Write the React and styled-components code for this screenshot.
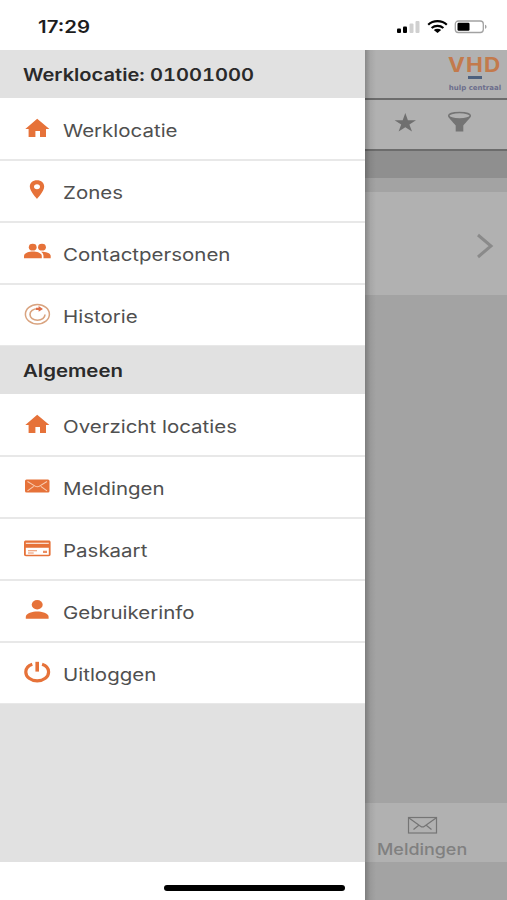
import styled, { createGlobalStyle } from "styled-components"

const GlobalStyle = createGlobalStyle`
    * {
        box-sizing: border-box;
    }
    body {
        margin: 0;
        background-color: #fff;
        font-family: Inter, "Liberation Sans", sans-serif;
    }
`

const Screen = styled.div`
    width: 507px;
    height: 900px;
    display: flex;
    flex-direction: column;
    overflow: hidden;
    position: relative;
    background-color: #fff;
`

//status bar of the phone
const StatusBar = styled.div`
    height: 50px;
    flex: none;
    display: flex;
    align-items: center;
    justify-content: space-between;
    padding: 3px 19px 0 38px;
`

//all labels are a bit wider than the font itself, so they get stretched from the left
const Label = styled.span`
    display: inline-block;
    white-space: nowrap;
    transform: scaleX(${props => props.$stretch || 1.17});
    transform-origin: ${props => props.$origin || "left"} center;
`

const Time = styled(Label)`
    font-size: 17px;
    font-weight: 600;
    line-height: 20px;
    color: #1d1d1d;
`

const Status = styled.div`
    display: flex;
    align-items: center;
`

const Main = styled.div`
    flex: 1;
    display: flex;
    min-height: 0;
`

const Drawer = styled.nav`
    width: 365px;
    flex: none;
    display: flex;
    flex-direction: column;
    background-color: #e1e1e1;
`

const SectionTitle = styled.div`
    height: 48px;
    flex: none;
    display: flex;
    align-items: center;
    padding: 1px 0 0 23px;
    font-size: 17px;
    font-weight: 600;
    font-variant-numeric: tabular-nums;
    color: #2a2a2a;
`

const List = styled.div`
    flex: none;
    display: flex;
    flex-direction: column;
`

//the first row is 1px higher and the last one has a thinner line, the section title follows it directly
const Item = styled.div`
    height: 62px;
    display: flex;
    align-items: center;
    padding-left: 23px;
    background-color: #fff;
    border-bottom: 2px solid #e8e8e8;
    font-size: 17.5px;
    color: #505050;

    &:first-child {
        height: 63px;
        padding-top: 1px;
    }

    &:last-child {
        height: 61px;
        border-bottom: 1px solid #e8e8e8;
    }
`

const IconBox = styled.div`
    width: 28px;
    height: 24px;
    margin-right: 12px;
    flex: none;
    display: flex;
`

const ItemLabel = styled(Label)`
    padding-top: 3px;
`

const DrawerFoot = styled.div`
    height: 38px;
    flex: none;
    margin-top: auto;
    background-color: #fff;
`

//the page behind the drawer, already dimmed
const Page = styled.div`
    flex: 1;
    display: flex;
    flex-direction: column;
    position: relative;
    background-color: #a3a3a3;

    &::before {
        content: "";
        position: absolute;
        top: 0;
        bottom: 0;
        left: 0;
        width: 11px;
        background: linear-gradient(to right, rgba(0, 0, 0, 0.23), rgba(0, 0, 0, 0.06) 50%, rgba(0, 0, 0, 0));
    }
`

const Header = styled.div`
    height: 50px;
    flex: none;
    display: flex;
    justify-content: flex-end;
    padding: 5px 6px 0 0;
    background-color: #b1b1b1;
    border-bottom: 2px solid #6c6c6c;
`

const Logo = styled.div`
    width: 52px;
    display: flex;
    flex-direction: column;
    align-items: center;
`

const LogoName = styled.div`
    height: 20px;
    font-size: 20px;
    font-weight: 700;
    line-height: 20px;
    letter-spacing: 1px;
    color: #c37a4c;
`

const LogoDash = styled.div`
    width: 14px;
    height: 3px;
    margin-top: 1px;
    background-color: #4c607e;
`

const LogoSub = styled.div`
    margin-top: 4px;
    font-family: "DejaVu Sans", sans-serif;
    font-size: 7px;
    font-weight: 700;
    line-height: 11px;
    white-space: nowrap;
    color: #6c6d8c;
`

const Toolbar = styled.div`
    height: 51px;
    flex: none;
    display: flex;
    gap: 30px;
    padding: 11px 0 0 28px;
    background-color: #b1b1b1;
    border-bottom: 2px solid #6c6c6c;
`

const Band = styled.div`
    height: 27px;
    flex: none;
    background-color: #8f8f8f;
`

const Card = styled.div`
    height: 103px;
    flex: none;
    display: flex;
    align-items: center;
    justify-content: flex-end;
    margin-top: 14px;
    padding: 5px 12px 0 0;
    background-color: #b1b1b1;
`

const TabBar = styled.div`
    height: 59px;
    flex: none;
    display: flex;
    flex-direction: column;
    align-items: flex-start;
    margin: auto 0 38px;
    padding: 13px 0 0 12px;
    background-color: #b1b1b1;
    font-size: 16px;
    font-weight: 500;
    line-height: 20px;
    color: #808080;

    svg {
        margin: 0 0 5px 30px;
    }
`

const HomeIndicator = styled.div`
    position: absolute;
    left: 164px;
    bottom: 9px;
    width: 181px;
    height: 6px;
    border-radius: 3px;
    background-color: #000;
`

const Icon = ({ children }) => (
    <svg width="28" height="24" viewBox="0 0 28 24" fill="#e67239">
        {children}
    </svg>
)

const icons = {
    home: (
        <Icon>
            <path d="M14.2 1.700 26.400 11.900h-3.400V20.100h-6V14.100h-4.600v6H5.600V11.900H2.300Z" />
        </Icon>
    ),
    pin: (
        <Icon>
            <path fillRule="evenodd" d="M14 1.200c-4.300 0-7.200 2.700-7.200 6.400 0 4.900 7.200 12.300 7.200 12.300s7.200-7.400 7.200-12.300c0-3.700-2.900-6.400-7.200-6.400Zm0 4c1.900 0 3 1 3 2.500s-1.100 2.500-3 2.500-3-1-3-2.500 1.100-2.500 3-2.500Z" />
        </Icon>
    ),
    people: (
        <Icon>
            <ellipse cx="9.700" cy="6.200" rx="3.900" ry="3.400" />
            <ellipse cx="19" cy="6.200" rx="3.900" ry="3.400" />
            <path d="M1 17.300v-2.400c0-2.800 5.400-4.300 8.900-4.300s8.900 1.500 8.900 4.300v2.400Z" />
            <path d="M18 10.700c4.100-.1 9.700 1.200 9.700 4.200v2.400h-7.200v-2.400c0-1.800-1-3.200-2.500-4.200Z" />
        </Icon>
    ),
    history: (
        <Icon>
            <g fill="none" stroke="#d9a37f">
                <ellipse cx="14.400" cy="11.200" rx="12" ry="9.700" strokeWidth="1.500" />
                <path d="M14.500 5.700c-4.300 0-7.500 2.400-7.500 5.700s3.300 5.800 7.500 5.800 7.500-2.500 7.500-5.700" strokeWidth="1.600" />
            </g>
            <path fill="#df6e48" d="M13 4.700h2.600V3l4.400 2.900-4.400 2.900V7.100H13Z" />
        </Icon>
    ),
    mail: (
        <Icon>
            <rect x="2" y="4.500" width="24.500" height="13" rx="1.500" />
            <path fill="none" stroke="#f8cdb2" strokeWidth="1.100" d="m4.500 6.500 7.600 4.600c1.500.9 3 .9 4.400 0L24 6.500M4.500 15.900l6.200-4.500M24 15.900l-6.200-4.500" />
        </Icon>
    ),
    card: (
        <Icon>
            <path fillRule="evenodd" d="M3 3.500h22.600c1.200 0 2 .7 2 1.600v12.500c0 1-.8 1.700-2 1.700H3c-1.200 0-2-.7-2-1.700v-12.500C1 4.200 1.800 3.500 3 3.500Zm-.2 2.200v1.100h23v-1.100Zm0 5v7h23v-7Z" />
            <path d="M5 13.300h9v1H5Zm0 2.200h5.700v1H5Zm15-1.700h4V16h-4Z" opacity=".8" />
        </Icon>
    ),
    user: (
        <Icon>
            <ellipse cx="14.200" cy="5.700" rx="5.500" ry="4.700" />
            <path d="M2.800 19.700v-2c0-3.600 7-5.300 11.400-5.300s11.400 1.700 11.400 5.300v2Z" />
        </Icon>
    ),
    power: (
        <Icon>
            <g fill="none" stroke="#e67239">
                <path d="M9.300 3.200C5.200 4.500 2.800 7.500 2.800 11c0 5 5 8.800 11.400 8.800s11.400-3.800 11.400-8.800c0-3.500-2.400-6.500-6.500-7.800" strokeWidth="3.200" />
                <path d="M14.200.8v9.800" strokeWidth="3.600" />
            </g>
        </Icon>
    ),
}

const locationItems = [
    { icon: "home", label: "Werklocatie" },
    { icon: "pin", label: "Zones" },
    { icon: "people", label: "Contactpersonen" },
    { icon: "history", label: "Historie" },
]

const generalItems = [
    { icon: "home", label: "Overzicht locaties" },
    { icon: "mail", label: "Meldingen" },
    { icon: "card", label: "Paskaart" },
    { icon: "user", label: "Gebruikerinfo" },
    { icon: "power", label: "Uitloggen" },
]

const MenuList = ({ items }) => (
    <List>
        {items.map((item) => (
            <Item key={item.label}>
                <IconBox>{icons[item.icon]}</IconBox>
                <ItemLabel>{item.label}</ItemLabel>
            </Item>
        ))}
    </List>
)

//signal, wifi and battery
const StatusIcons = () => (
    <Status>
        <svg width="92" height="16" viewBox="0 0 92 16">
            <rect x="1" y="9.500" width="4" height="4.500" rx="1" />
            <rect x="7" y="7.500" width="4" height="6.500" rx="1" />
            <rect x="13.500" y="4.500" width="4" height="9.500" rx="1" fill="#d0d0d0" />
            <rect x="19.500" y="2" width="4" height="12" rx="1" fill="#d0d0d0" />
            <g fill="none" stroke="#000" strokeWidth="2.200">
                <path d="M32.200 5.700c5-4.700 13.600-4.700 18.600 0" />
                <path d="M35.600 9c3.400-2.900 8.400-2.900 11.800 0" />
            </g>
            <path d="M37.800 11c2-1.600 5.400-1.600 7.400 0l-3.700 3Z" />
            <rect x="59.300" y="2" width="28" height="11.500" rx="3" fill="none" stroke="#a2a2a2" strokeWidth="1.300" />
            <rect x="61.500" y="3.800" width="12" height="8" rx="1.200" />
            <path d="M89 5.800c2 .5 2 3.500 0 4Z" fill="#a2a2a2" />
        </svg>
    </Status>
)

const App = () => {
    return (
        <>
            <GlobalStyle />
            <Screen>
                <StatusBar>
                    <Time $stretch={1.2}>17:29</Time>
                    <StatusIcons />
                </StatusBar>
                <Main>
                    <Drawer>
                        <SectionTitle>
                            <Label $stretch={1.182}>Werklocatie: 01001000</Label>
                        </SectionTitle>
                        <MenuList items={locationItems} />
                        <SectionTitle>
                            <Label $stretch={1.2}>Algemeen</Label>
                        </SectionTitle>
                        <MenuList items={generalItems} />
                        <DrawerFoot />
                    </Drawer>
                    <Page>
                        <Header>
                            <Logo>
                                <LogoName>
                                    <Label $stretch={1.13} $origin="center">VHD</Label>
                                </LogoName>
                                <LogoDash />
                                <LogoSub>hulp centraal</LogoSub>
                            </Logo>
                        </Header>
                        <Toolbar>
                            <svg width="24" height="24" viewBox="0 0 24 24" fill="#6f6f6f">
                                <path d="m12.300 2 2.600 7.300H23l-6.600 4.300 2.600 7-6.700-4.300-6.700 4.300 2.600-7L1.600 9.300h8.100Z" />
                            </svg>
                            <svg width="26" height="24" viewBox="0 0 26 24">
                                <path fill="#747474" d="M1.500 5c0 2 4 5.700 7.200 9.500v6h7.600v-6C19.500 10.700 23.500 7 23.500 5Z" />
                                <ellipse cx="12.500" cy="4.800" rx="10.800" ry="3.200" fill="#b1b1b1" stroke="#747474" strokeWidth="1.500" />
                            </svg>
                        </Toolbar>
                        <Band />
                        <Card>
                            <svg width="20" height="26" viewBox="0 0 20 26" fill="none" stroke="#8a8a8a" strokeWidth="3">
                                <path d="m3 2 13 11L3 24" />
                            </svg>
                        </Card>
                        <TabBar>
                            <svg width="31" height="18" viewBox="0 0 31 18" fill="none" stroke="#757575" strokeWidth="1.200">
                                <rect x="1.500" y="1.500" width="28" height="15.500" />
                                <path d="m2 2 11.500 8.200c1.300 1 2.700 1 4 0L29 2M6.500 13.500l5-4M24.500 13.500l-5-4" />
                            </svg>
                            <Label $stretch={1.12}>Meldingen</Label>
                        </TabBar>
                    </Page>
                </Main>
                <HomeIndicator />
            </Screen>
        </>
    )
}

export default App
